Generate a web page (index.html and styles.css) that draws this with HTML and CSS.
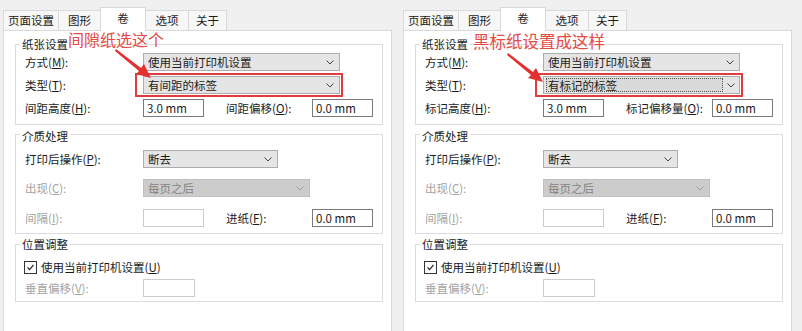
FILE: index.html
```html
<!DOCTYPE html>
<html lang="zh-CN">
<head>
  <meta charset="UTF-8" />
  <title>卷 设置</title>
  <link rel="stylesheet" href="styles.css">
</head>
<body>
  <div class="shots">

    <!-- 左：间隙纸 -->
    <div class="dialog">
      <div class="tabs">
        <span class="tab w1">页面设置</span>
        <span class="tab w2">图形</span>
        <span class="tab active">卷</span>
        <span class="tab w4">选项</span>
        <span class="tab w5">关于</span>
      </div>
      <div class="page">
        <fieldset class="group g1">
          <legend>纸张设置</legend>
          <div class="row">
            <label class="lbl">方式(<u>M</u>):</label>
            <div class="select s-wide">使用当前打印机设置<svg class="chev" viewBox="0 0 8 5"><path d="M0.5 0.5 L4 4 L7.5 0.5" /></svg></div>
          </div>
          <div class="row">
            <label class="lbl">类型(<u>T</u>):</label>
            <div class="select s-wide marked">有间距的标签<svg class="chev" viewBox="0 0 8 5"><path d="M0.5 0.5 L4 4 L7.5 0.5" /></svg></div>
          </div>
          <div class="row">
            <label class="lbl">间距高度(<u>H</u>):</label>
            <div class="input">3.0 mm</div>
            <label class="lbl2">间距偏移(<u>O</u>):</label>
            <div class="input">0.0 mm</div>
          </div>
        </fieldset>

        <fieldset class="group g2">
          <legend>介质处理</legend>
          <div class="row">
            <label class="lbl">打印后操作(<u>P</u>):</label>
            <div class="select s-mid">断去<svg class="chev" viewBox="0 0 8 5"><path d="M0.5 0.5 L4 4 L7.5 0.5" /></svg></div>
          </div>
          <div class="row">
            <label class="lbl off">出现(<u>C</u>):</label>
            <div class="select s-long disabled">每页之后<svg class="chev" viewBox="0 0 8 5"><path d="M0.5 0.5 L4 4 L7.5 0.5" /></svg></div>
          </div>
          <div class="row">
            <label class="lbl off">间隔(<u>I</u>):</label>
            <div class="input disabled"></div>
            <label class="lbl2">进纸(<u>F</u>):</label>
            <div class="input">0.0 mm</div>
          </div>
        </fieldset>

        <fieldset class="group g3">
          <legend>位置调整</legend>
          <div class="row check-row">
            <span class="check"><svg viewBox="0 0 13 13"><path d="M3 6.5 L5.5 9 L10 3.5" /></svg></span>
            <label>使用当前打印机设置(<u>U</u>)</label>
          </div>
          <div class="row">
            <label class="lbl off">垂直偏移(<u>V</u>):</label>
            <div class="input short disabled"></div>
          </div>
        </fieldset>
      </div>

      <div class="note note-left">间隙纸选这个</div>
      <svg class="arrow arrow-left" viewBox="0 0 40 34"><path d="M2 2 L27 21 L30 17 L37 31 L22 27 L25 24 L1 4 Z" /></svg>
    </div>

    <!-- 右：黑标纸 -->
    <div class="dialog">
      <div class="tabs">
        <span class="tab w1">页面设置</span>
        <span class="tab w2">图形</span>
        <span class="tab active">卷</span>
        <span class="tab w4">选项</span>
        <span class="tab w5">关于</span>
      </div>
      <div class="page">
        <fieldset class="group g1">
          <legend>纸张设置</legend>
          <div class="row">
            <label class="lbl">方式(<u>M</u>):</label>
            <div class="select s-wide">使用当前打印机设置<svg class="chev" viewBox="0 0 8 5"><path d="M0.5 0.5 L4 4 L7.5 0.5" /></svg></div>
          </div>
          <div class="row">
            <label class="lbl">类型(<u>T</u>):</label>
            <div class="select s-wide marked focused"><span class="focus-text">有标记的标签</span><svg class="chev" viewBox="0 0 8 5"><path d="M0.5 0.5 L4 4 L7.5 0.5" /></svg></div>
          </div>
          <div class="row">
            <label class="lbl">标记高度(<u>H</u>):</label>
            <div class="input">3.0 mm</div>
            <label class="lbl2">标记偏移量(<u>O</u>):</label>
            <div class="input">0.0 mm</div>
          </div>
        </fieldset>

        <fieldset class="group g2">
          <legend>介质处理</legend>
          <div class="row">
            <label class="lbl">打印后操作(<u>P</u>):</label>
            <div class="select s-mid">断去<svg class="chev" viewBox="0 0 8 5"><path d="M0.5 0.5 L4 4 L7.5 0.5" /></svg></div>
          </div>
          <div class="row">
            <label class="lbl off">出现(<u>C</u>):</label>
            <div class="select s-long disabled">每页之后<svg class="chev" viewBox="0 0 8 5"><path d="M0.5 0.5 L4 4 L7.5 0.5" /></svg></div>
          </div>
          <div class="row">
            <label class="lbl off">间隔(<u>I</u>):</label>
            <div class="input disabled"></div>
            <label class="lbl2">进纸(<u>F</u>):</label>
            <div class="input">0.0 mm</div>
          </div>
        </fieldset>

        <fieldset class="group g3">
          <legend>位置调整</legend>
          <div class="row check-row">
            <span class="check"><svg viewBox="0 0 13 13"><path d="M3 6.5 L5.5 9 L10 3.5" /></svg></span>
            <label>使用当前打印机设置(<u>U</u>)</label>
          </div>
          <div class="row">
            <label class="lbl off">垂直偏移(<u>V</u>):</label>
            <div class="input short disabled"></div>
          </div>
        </fieldset>
      </div>

      <div class="note note-right">黑标纸设置成这样</div>
      <svg class="arrow arrow-right" viewBox="0 0 40 34"><path d="M2 2 L27 21 L30 17 L37 31 L22 27 L25 24 L1 4 Z" /></svg>
    </div>

  </div>
</body>
</html>
```

FILE: styles.css
```css
* {
  box-sizing: border-box;
}

body {
  margin: 0;
  background: #f0f0f0;
  color: #1b1b1b;
  font-family: "Noto Sans CJK SC", sans-serif;
  font-size: 11.5px;
}

.shots {
  display: flex;
  gap: 11px;
  padding: 7px 0 0 3px;
}

.dialog {
  position: relative;
  width: 389px;
}

/* tabs */
.tabs {
  display: flex;
  align-items: flex-end;
  height: 23px;
}

.tab {
  height: 20px;
  line-height: 19px;
  text-align: center;
  border: 1px solid #d9d9d9;
  border-bottom: none;
  margin-right: -1px;
  background: #f7f7f7;
}

.tab.w1 { width: 56px; }
.tab.w2 { width: 43px; }
.tab.w4 { width: 44px; }
.tab.w5 { width: 39px; }

.tab.active {
  width: 46px;
  height: 24px;
  line-height: 20px;
  background: #fff;
  margin-bottom: -1px;
  position: relative;
  z-index: 1;
}

.page {
  background: #fff;
  border: 1px solid #d9d9d9;
  height: 310px;
  padding: 5px 8px 0 11px;
}

/* group boxes */
.group {
  margin: 0;
  border: 1px solid #dcdcdc;
  padding: 1px 0 7px 9px;
  min-width: 0;
}

.group legend {
  padding: 0 2px;
  margin-left: -5px;
  line-height: 16px;
  color: #1b1b1b;
}

.g2 {
  margin-top: 1px;
  padding-top: 8px;
  padding-bottom: 6px;
}

.g2 legend {
  position: relative;
  top: 2px;
}

.g2 .row {
  margin-bottom: 11px;
}

.g2 .row + .row {
  margin-bottom: 12px;
}

.g3 {
  margin-top: 2px;
  padding-top: 7px;
  padding-bottom: 4px;
}

.row {
  display: flex;
  align-items: center;
  height: 18px;
  margin-bottom: 5px;
}

.row:last-child {
  margin-bottom: 0 !important;
}

.lbl {
  width: 118px;
}

.lbl2 {
  width: 86px;
  margin-left: 22px;
}

.off {
  color: #a3a3a3;
}

/* controls */
.select {
  position: relative;
  height: 18px;
  line-height: 16px;
  padding-left: 4px;
  background: #e5e5e5;
  border: 1px solid #adadad;
}

.select.disabled {
  background: #cccccc;
  border-color: #bfbfbf;
  color: #838383;
}

.s-wide { width: 197px; }
.s-mid { width: 135px; }
.s-long { width: 167px; }

.chev {
  position: absolute;
  right: 5px;
  top: 6px;
  width: 8px;
  height: 5px;
  fill: none;
  stroke: #444;
  stroke-width: 1;
}

.disabled .chev {
  stroke: #a0a0a0;
}

.marked::after {
  content: "";
  position: absolute;
  left: -9px;
  right: -4px;
  top: -4px;
  bottom: -4px;
  border: 2px solid #e33b3b;
}

.focused {
  padding-left: 2px;
}

.focus-text {
  display: block;
  margin-top: 1px;
  width: 177px;
  height: 14px;
  line-height: 12px;
  padding-left: 1px;
  border: 1px dotted #555;
  background: #dadada;
}

.focused .chev {
  right: 4px;
}

.input {
  width: 61px;
  height: 18px;
  line-height: 16px;
  padding-left: 3px;
  border: 1px solid #7a7a7a;
  background: #fff;
}

.input.disabled {
  border-color: #cccccc;
}

.input.short {
  width: 52px;
}

/* checkbox */
.check-row {
  height: 16px;
  margin-bottom: 4px !important;
}

.check {
  width: 13px;
  height: 13px;
  border: 1px solid #333;
  margin: 0 4px 0 -1px;
  display: flex;
}

.check svg {
  width: 11px;
  height: 11px;
  fill: none;
  stroke: #222;
  stroke-width: 1.4;
}

/* annotations */
.note {
  position: absolute;
  color: #e64a43;
  font-size: 16px;
  line-height: 18px;
  white-space: nowrap;
}

.note-left {
  left: 65px;
  top: 23px;
}

.note-right {
  left: 70px;
  top: 25px;
  font-size: 16.5px;
}

.arrow {
  position: absolute;
  width: 40px;
  height: 34px;
  fill: #e33030;
}

.arrow-left {
  left: 111px;
  top: 40px;
}

.arrow-right {
  left: 103px;
  top: 44px;
}
```
